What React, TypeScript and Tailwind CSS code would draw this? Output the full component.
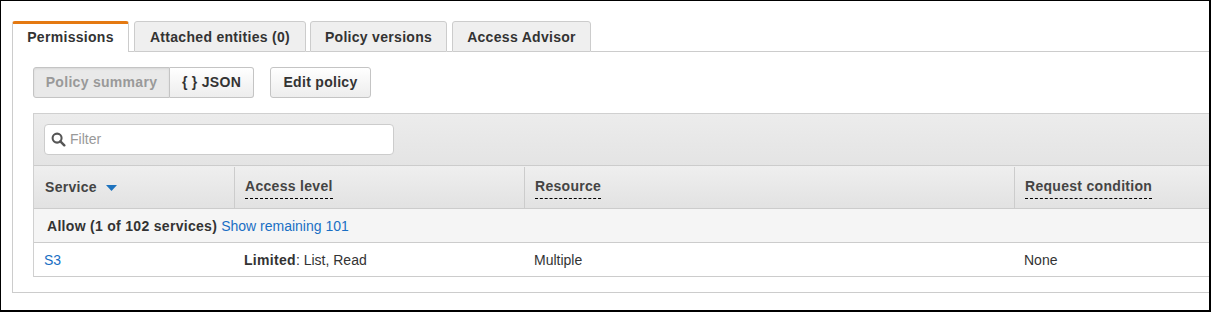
import React from "react";

const tabs = [
  { label: "Attached entities (0)", w: "w-[172px]", gap: "w-[5px]" },
  { label: "Policy versions", w: "w-[137px]", gap: "w-[4px]" },
  { label: "Access Advisor", w: "w-[139px]", gap: "w-[5px]" },
];

function Dotted({ children }: { children: React.ReactNode }) {
  return <span className="border-b border-dashed border-black pb-[1px]">{children}</span>;
}

export default function App() {
  return (
    <div className="w-[1211px] h-[312px] overflow-hidden bg-white border-l border-t border-r-2 border-b-2 border-black font-['Liberation_Sans',Arial,sans-serif] text-[14px] text-[#333]">
      <div className="pl-[11px] pt-[20px] w-[1400px]">
        {/* tabs */}
        <div className="flex items-end h-[31px] tracking-[0.3px]">
          <div className="h-[31px] w-[117px] flex items-center justify-center border-t-[3px] border-t-[#e47911] border-x border-x-[#ccc] rounded-t-[3px] bg-white font-bold text-[#333] pb-[1px]">
            Permissions
          </div>
          {tabs.map((t) => (
            <React.Fragment key={t.label}>
              <div className={`${t.gap} h-[31px] border-b border-[#ccc]`} />
              <div className={`${t.w} h-[31px] flex items-center justify-center border border-[#ccc] rounded-t-[3px] bg-[#efefef] font-bold text-[#333] pt-[1px]`}>
                {t.label}
              </div>
            </React.Fragment>
          ))}
          <div className="flex-1 h-[31px] border-b border-[#ccc]" />
        </div>

        {/* panel */}
        <div className="border-l border-b border-[#ccc] pl-[20px] pt-[15px] pb-[15px]">
          <div className="flex items-center gap-[16px] h-[31px] tracking-[0.3px]">
            <div className="flex h-[31px]">
              <div className="w-[137px] flex items-center justify-center border border-[#c4c4c4] rounded-l-[3px] bg-[#e9e9e9] shadow-[inset_0_1px_2px_rgba(0,0,0,0.08)] font-bold text-[#999]">
                Policy summary
              </div>
              <div className="w-[84px] flex items-center justify-center border border-l-0 border-[#c4c4c4] rounded-r-[3px] bg-gradient-to-b from-white to-[#ededed] font-bold text-[#333]">
                {"{ } JSON"}
              </div>
            </div>
            <div className="w-[101px] h-[31px] flex items-center justify-center border border-[#c4c4c4] rounded-[3px] bg-gradient-to-b from-white to-[#ededed] font-bold text-[#333]">
              Edit policy
            </div>
          </div>

          {/* table */}
          <div className="mt-[15px] border-t border-l border-[#d0d0d0]">
            <div className="h-[51px] pl-[10px] flex items-center bg-gradient-to-b from-[#ececec] to-[#e4e4e4]">
              <div className="w-[350px] h-[31px] bg-white border border-[#ccc] rounded-[4px] flex items-center pl-[6px] gap-[4px]">
                <svg width="15" height="15" viewBox="0 0 16 16">
                  <circle cx="6.5" cy="6.5" r="4.8" fill="none" stroke="#555" strokeWidth="2.2" />
                  <line x1="10" y1="10" x2="14.2" y2="14.2" stroke="#555" strokeWidth="2.6" strokeLinecap="round" />
                </svg>
                <span className="text-[#999]">Filter</span>
              </div>
            </div>
            <div className="flex h-[44px] pt-[1px] border-t border-b border-[#ccc] bg-gradient-to-b from-[#efefef] to-[#e2e2e2] font-bold text-[#444] tracking-[0.3px]">
              <div className="w-[200px] pl-[11px] flex items-center">
                Service
                <svg className="ml-[9px] mt-[1px]" width="11" height="6" viewBox="0 0 11 6">
                  <path d="M0 0 H11 L5.5 6 Z" fill="#1e73be" />
                </svg>
              </div>
              <div className="w-[290px] pl-[10px] flex items-center border-l border-[#ccc]">
                <Dotted>Access level</Dotted>
              </div>
              <div className="w-[490px] pl-[10px] flex items-center border-l border-[#ccc]">
                <Dotted>Resource</Dotted>
              </div>
              <div className="flex-1 pl-[10px] flex items-center border-l border-[#ccc]">
                <Dotted>Request condition</Dotted>
              </div>
            </div>
            <div className="h-[34px] pt-[1px] pl-[13px] flex items-center bg-[#f5f5f5] border-b border-[#ccc]">
              <span className="font-bold text-[#333] tracking-[0.3px]">Allow (1 of 102 services)</span>
              <span className="ml-[4px] text-[#1a6fc4]">Show remaining 101</span>
            </div>
            <div className="flex h-[34px] pt-[1px] items-center border-b border-[#ccc]">
              <div className="w-[200px] pl-[10px] text-[#1a6fc4]">S3</div>
              <div className="w-[290px] pl-[10px]">
                <span className="font-bold tracking-[0.3px]">Limited</span>: List, Read
              </div>
              <div className="w-[490px] pl-[10px]">Multiple</div>
              <div className="flex-1 pl-[10px]">None</div>
            </div>
          </div>
        </div>
      </div>
    </div>
  );
}
